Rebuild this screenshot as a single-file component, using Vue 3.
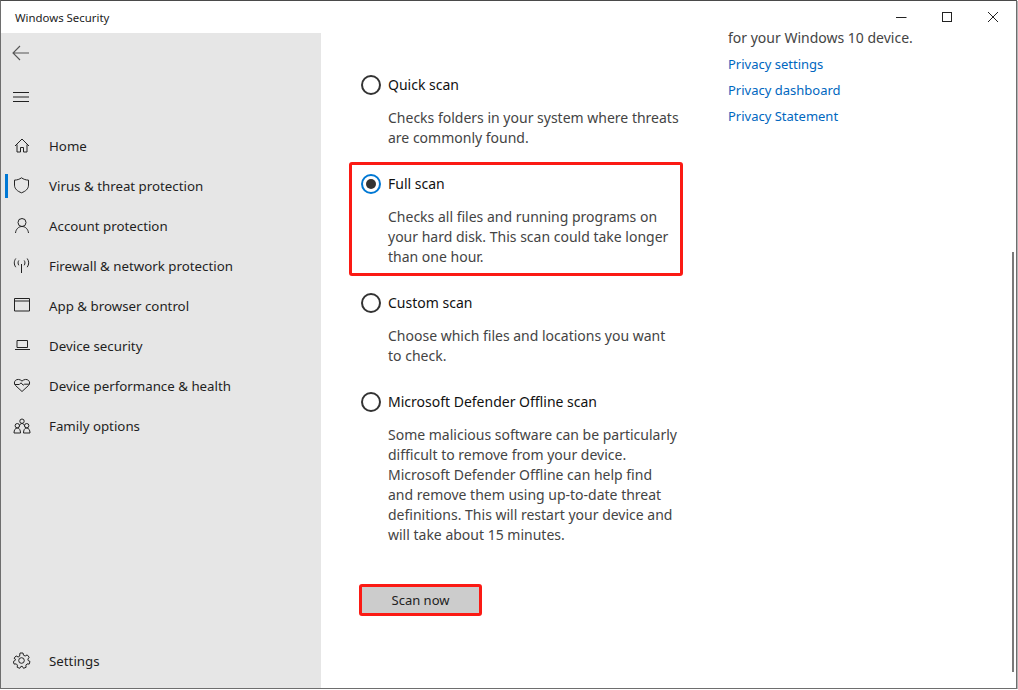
<script setup>
const navItems = [
  { label: 'Home', icon: 'home' },
  { label: 'Virus & threat protection', icon: 'shield', active: true },
  { label: 'Account protection', icon: 'user' },
  { label: 'Firewall & network protection', icon: 'wifi' },
  { label: 'App & browser control', icon: 'app' },
  { label: 'Device security', icon: 'laptop' },
  { label: 'Device performance & health', icon: 'heart' },
  { label: 'Family options', icon: 'family' }
]

const scans = [
  { name: 'Quick scan', lines: ['Checks folders in your system where threats', 'are commonly found.'] },
  { name: 'Full scan', selected: true, lines: ['Checks all files and running programs on', 'your hard disk. This scan could take longer', 'than one hour.'] },
  { name: 'Custom scan', lines: ['Choose which files and locations you want', 'to check.'] },
  {
    name: 'Microsoft Defender Offline scan',
    lines: [
      'Some malicious software can be particularly',
      'difficult to remove from your device.',
      'Microsoft Defender Offline can help find',
      'and remove them using up-to-date threat',
      'definitions. This will restart your device and',
      'will take about 15 minutes.'
    ]
  }
]

const links = ['Privacy settings', 'Privacy dashboard', 'Privacy Statement']
</script>

<template>
  <div class="window">
    <header class="titlebar">
      <span class="title">Windows Security</span>
      <div class="controls">
        <svg width="12" height="12" viewBox="0 0 12 12"><path d="M1 6.500h10.500" stroke="#222" fill="none" /></svg>
        <svg width="12" height="12" viewBox="0 0 12 12"><rect x="1.500" y="1.500" width="9" height="9" stroke="#222" fill="none" /></svg>
        <svg width="12" height="12" viewBox="0 0 12 12"><path d="M1 1l10 10M11 1L1 11" stroke="#222" fill="none" /></svg>
      </div>
    </header>

    <div class="body">
      <aside class="sidebar">
        <div class="tool">
          <svg width="18" height="16" viewBox="0 0 18 16"><path d="M8 1L1 8l7 7M1 8h16" stroke="#555" stroke-width="1.100" fill="none" /></svg>
        </div>
        <div class="tool burger">
          <svg width="16" height="10" viewBox="0 0 16 10"><path d="M0 .5h16M0 5h16M0 9.500h16" stroke="#222" fill="none" /></svg>
        </div>

        <nav class="nav">
          <div v-for="item in navItems" :key="item.label" class="nav-item" :class="{ active: item.active }">
            <svg class="icon" width="18" height="18" viewBox="0 0 18 18" fill="none" stroke="#222" stroke-width="1">
              <path v-if="item.icon === 'home'" d="M2 9l7-7 7 7M4 7.500v7.500h3.500v-4.500h3V15H14V7.500" />
              <path v-else-if="item.icon === 'shield'" d="M8.500 .8c2 1.500 4.400 2.300 7 2.300v5c0 3.800-3 6.200-7 7.700-4-1.500-7-3.900-7-7.700v-5c2.600 0 5-.8 7-2.300z" />
              <path v-else-if="item.icon === 'user'" d="M9 1.500a4 4 0 1 1 0 8 4 4 0 0 1 0-8zM2.500 16c.4-3.800 3-6.500 6.500-6.500s6.100 2.700 6.500 6.500" />
              <path v-else-if="item.icon === 'wifi'" d="M8.500 7v9M5.800 3.500c-1 1.500-1 3.200 0 4.800M11.200 3.500c1 1.500 1 3.200 0 4.800M2.800 1.500C.8 4.200.8 7.500 2.800 10.200M14.200 1.500c2 2.700 2 6 0 8.700" />
              <path v-else-if="item.icon === 'app'" d="M1.500 1.500h15v12.500h-15zM1.500 4h15" />
              <path v-else-if="item.icon === 'laptop'" d="M4 3.500h10.500v7H4zM2 12.500h15" />
              <path v-else-if="item.icon === 'heart'" d="M2.600 8.600C1 7.100 1 4.900 2.400 3.500c1.600-1.600 4.600-1.400 6.600.6 2-2 5-2.200 6.600-.6C17 4.900 17 7.100 15.400 8.600L9 14.500zM1.800 7.500h4.500l1.700-1.700 2.200 2.400 1.300-1h4.700" />
              <path v-else-if="item.icon === 'family'" d="M9 2a2.200 2.200 0 1 1 0 4.400A2.200 2.200 0 0 1 9 2zM4.300 6.500a2.200 2.200 0 1 1 0 4.400 2.200 2.200 0 0 1 0-4.400zM13.700 6.500a2.200 2.200 0 1 1 0 4.400 2.200 2.200 0 0 1 0-4.400zM1 16c0-3 1.300-5 3.300-5s3.200 2 3.200 5zM10.500 16c0-3 1.200-5 3.200-5s3.300 2 3.300 5zM6.200 9.500c.5-1.900 1.500-3 2.800-3s2.300 1.100 2.800 3" />
            </svg>
            <span>{{ item.label }}</span>
          </div>
        </nav>

        <div class="nav-item settings">
          <svg class="icon" width="18" height="18" viewBox="0 0 18 18" fill="none" stroke="#222" stroke-width="1">
            <circle cx="8.500" cy="8.500" r="2.800" />
            <path d="M7 1h3l.5 2.200 1.700.8 2-1.100 2 2.300-1.300 1.900.3 1.400 1.800 1-.8 2.600-2.200-.2-1.100 1.200.2 2.200-2.600 1-1.100-1.900H7.900L6.800 16.300l-2.600-1 .2-2.200-1.100-1.200-2.200.2-.8-2.600 1.800-1 .3-1.400L1.100 6.200l2-2.300 2 1.100 1.500-.8z" />
          </svg>
          <span>Settings</span>
        </div>
      </aside>

      <main class="content">
        <section class="scans">
          <div v-for="scan in scans" :key="scan.name" class="scan" :class="{ marked: scan.selected }">
            <div class="scan-head">
              <span class="radio" :class="{ on: scan.selected }"></span>
              <span class="scan-name">{{ scan.name }}</span>
            </div>
            <p class="scan-desc">
              <span v-for="line in scan.lines" :key="line">{{ line }}</span>
            </p>
          </div>
          <button class="scan-btn">Scan now</button>
        </section>

        <section class="privacy">
          <p class="privacy-line">for your Windows 10 device.</p>
          <a v-for="link in links" :key="link" class="link">{{ link }}</a>
        </section>

        <div class="scrollbar"></div>
      </main>
    </div>
  </div>
</template>

<style scoped>
.window {
  box-sizing: border-box;
  width: 1017px;
  height: 689px;
  display: flex;
  flex-direction: column;
  background: #fff;
  border: 1px solid #6e6e6e;
  border-top-color: #4a4a4a;
  box-shadow: 1px 1px 0 #b4b4b4;
  font-family: "Noto Sans", "Open Sans", sans-serif;
  font-size: 14px;
  line-height: 20px;
  color: #1f1f1f;
  overflow: hidden;
}
.titlebar {
  height: 32px;
  flex: none;
  display: flex;
  align-items: center;
  justify-content: space-between;
  position: relative;
  z-index: 1;
}
.title {
  margin: 2px 0 0 14px;
  font-size: 11.4px;
  color: #222;
}
.controls {
  display: flex;
  gap: 34px;
  margin-right: 17px;
}
.body {
  flex: 1;
  display: flex;
  min-height: 0;
}
.sidebar {
  width: 320px;
  flex: none;
  background: #e6e6e6;
  display: flex;
  flex-direction: column;
  font-size: 13.3px;
}
.tool {
  height: 40px;
  display: flex;
  align-items: center;
  padding-left: 11px;
}
.tool.burger {
  margin-top: 4px;
  padding-left: 12px;
}
.nav {
  margin-top: 9px;
  display: flex;
  flex-direction: column;
}
.nav-item {
  height: 40px;
  display: flex;
  align-items: center;
  position: relative;
  padding-left: 12px;
  gap: 18px;
}
.nav-item.active::before {
  content: '';
  position: absolute;
  left: 4px;
  top: 8px;
  width: 3px;
  height: 24px;
  background: #0078d4;
}
.icon {
  flex: none;
}
.settings {
  margin-top: auto;
  margin-bottom: 7px;
}
.content {
  flex: 1;
  position: relative;
  display: flex;
  min-width: 0;
}
.scans {
  width: 368px;
  margin-left: 39px;
  padding-top: 42px;
}
.scan {
  margin-bottom: 26px;
}
.scan.marked {
  position: relative;
}
.scan.marked::after {
  content: '';
  position: absolute;
  left: -11px;
  top: -12px;
  width: 334px;
  height: 114px;
  box-sizing: border-box;
  border: 3px solid #fb1a14;
  border-radius: 3px;
}
.scan-head {
  display: flex;
  align-items: center;
  height: 20px;
  gap: 7px;
}
.radio {
  box-sizing: border-box;
  width: 20px;
  height: 20px;
  margin-left: 1px;
  margin-top: -1px;
  border: 2px solid #333;
  border-radius: 50%;
  flex: none;
}
.radio.on {
  border-color: #0078d4;
  position: relative;
}
.radio.on::after {
  content: '';
  position: absolute;
  left: 3px;
  top: 3px;
  width: 10px;
  height: 10px;
  border-radius: 50%;
  background: #333;
}
.scan-name {
  color: #111;
}
.scan-desc {
  margin: 13px 0 0 28px;
  color: #444;
}
.scan-desc span {
  display: block;
  white-space: nowrap;
}
.scan-btn {
  display: block;
  box-sizing: border-box;
  margin: 39px 0 0 -1px;
  width: 123px;
  height: 32px;
  background: #ccc;
  border: 3px solid #fb1a14;
  border-radius: 3px;
  padding: 0;
  font: inherit;
  font-size: 13px;
  color: #222;
}
.privacy {
  margin-top: -5px;
  display: flex;
  flex-direction: column;
  align-items: flex-start;
  gap: 6px;
}
.privacy-line {
  margin: 0;
  color: #444;
}
.link {
  color: #0067c0;
  font-size: 13px;
}
.scrollbar {
  position: absolute;
  right: 2px;
  top: 219px;
  width: 2px;
  height: 420px;
  background: #7a7a7a;
}
</style>

<style>
html, body { margin: 0; background: #fff; }
</style>
